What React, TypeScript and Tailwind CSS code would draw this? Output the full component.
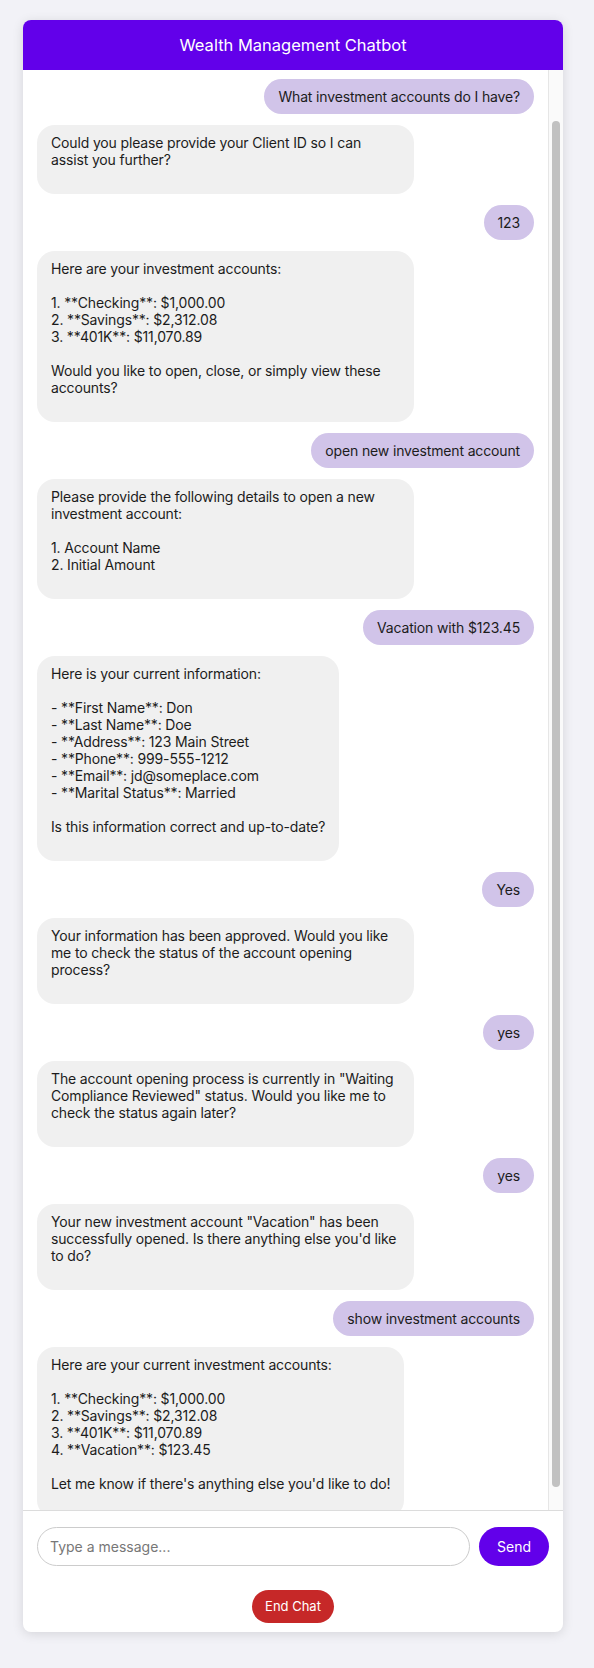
import React from "react";

type Msg = { from: "user" | "bot"; text: string };

const messages: Msg[] = [
  { from: "user", text: "What investment accounts do I have?" },
  { from: "bot", text: "Could you please provide your Client ID so I can assist you further?" },
  { from: "user", text: "123" },
  {
    from: "bot",
    text: "Here are your investment accounts:\n\n1. **Checking**: $1,000.00\n2. **Savings**: $2,312.08\n3. **401K**: $11,070.89\n\nWould you like to open, close, or simply view these accounts?",
  },
  { from: "user", text: "open new investment account" },
  {
    from: "bot",
    text: "Please provide the following details to open a new investment account:\n\n1. Account Name\n2. Initial Amount",
  },
  { from: "user", text: "Vacation with $123.45" },
  {
    from: "bot",
    text: "Here is your current information:\n\n- **First Name**: Don\n- **Last Name**: Doe\n- **Address**: 123 Main Street\n- **Phone**: 999-555-1212\n- **Email**: jd@someplace.com\n- **Marital Status**: Married\n\nIs this information correct and up-to-date?",
  },
  { from: "user", text: "Yes" },
  {
    from: "bot",
    text: "Your information has been approved. Would you like me to check the status of the account opening process?",
  },
  { from: "user", text: "yes" },
  {
    from: "bot",
    text: 'The account opening process is currently in "Waiting Compliance Reviewed" status. Would you like me to check the status again later?',
  },
  { from: "user", text: "yes" },
  {
    from: "bot",
    text: 'Your new investment account "Vacation" has been successfully opened. Is there anything else you\'d like to do?',
  },
  { from: "user", text: "show investment accounts" },
  {
    from: "bot",
    text: "Here are your current investment accounts:\n\n1. **Checking**: $1,000.00\n2. **Savings**: $2,312.08\n3. **401K**: $11,070.89\n4. **Vacation**: $123.45\n\nLet me know if there's anything else you'd like to do!",
  },
];

export default function App() {
  return (
    <div
      className="min-h-screen w-full bg-[#f2f2f7] pt-[20px]"
      style={{ fontFamily: "Inter, 'Noto Sans', sans-serif" }}
    >
      <div className="ml-[23px] w-[540px] overflow-hidden rounded-lg bg-white shadow-[0_2px_12px_rgba(0,0,0,0.12)]">
        <div className="flex h-[50px] items-center justify-center bg-[#6200ea] text-[16.5px] font-normal text-white">
          Wealth Management Chatbot
        </div>
        <div className="flex h-[1440px]">
          <div className="flex flex-1 flex-col gap-[11px] overflow-hidden px-[14px] pt-[9px]">
            {messages.map((m, i) =>
              m.from === "user" ? (
                <div key={i} className="flex shrink-0 justify-end">
                  <div className="max-w-[377px] whitespace-pre-line rounded-[18px] bg-[#d1c4e9] px-[14px] py-[9px] text-[14px] leading-[17px] tracking-[-0.15px] text-[#1c1c1c]">
                    {m.text}
                  </div>
                </div>
              ) : (
                <div key={i} className="flex shrink-0 justify-start">
                  <div className="max-w-[377px] whitespace-pre-line rounded-[18px] bg-[#f0f0f0] px-[14px] pb-[26px] pt-[9px] text-[14px] leading-[17px] tracking-[-0.15px] text-[#1c1c1c]">
                    {m.text}
                  </div>
                </div>
              )
            )}
          </div>
          <div className="flex w-[15px] shrink-0 justify-center border-l border-[#e6e6e6] bg-[#fafafa] pt-[51px]">
            <div className="h-[1366px] w-[8px] rounded-full bg-[#c1c1c1]" />
          </div>
        </div>
        <div className="border-t border-[#dcdcdc] px-[14px] pb-[9px] pt-[16px]">
          <div className="flex gap-[9px]">
            <input
              className="h-[39px] flex-1 rounded-full border border-[#cccccc] px-[12px] text-[14px] outline-none placeholder:text-[#777]"
              placeholder="Type a message..."
            />
            <button className="h-[39px] w-[70px] rounded-full bg-[#6200ea] text-[14px] text-white">
              Send
            </button>
          </div>
          <div className="mt-[24px] flex justify-center">
            <button className="h-[33px] rounded-full bg-[#c62828] px-[13px] text-[13px] text-white">
              End Chat
            </button>
          </div>
        </div>
      </div>
    </div>
  );
}
